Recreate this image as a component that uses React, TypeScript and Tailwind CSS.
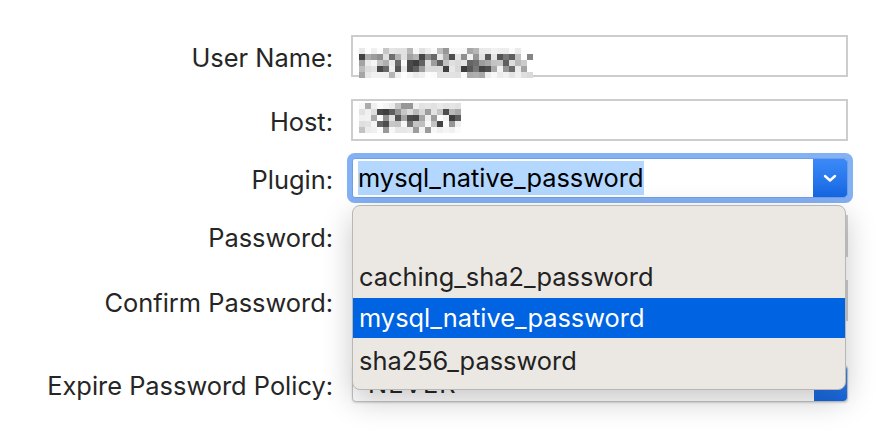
import React from "react";

function Mosaic({ cols, rows, seed, size, fade }: { cols: number; rows: number; seed: number; size: number; fade?: number }) {
  let s = seed;
  const rnd = () => {
    s = (s * 1103515245 + 12345) % 2147483648;
    return s / 2147483648;
  };
  const rects: React.ReactElement[] = [];
  for (let r = 0; r < rows; r++) {
    for (let c = 0; c < cols; c++) {
      const v = rnd();
      const mid = r >= 1 && r <= rows - 2;
      let g: number;
      if (mid) {
        g = v < 0.35 ? 60 + Math.floor(rnd() * 60) : v < 0.65 ? 140 + Math.floor(rnd() * 60) : 215 + Math.floor(rnd() * 40);
      } else {
        g = v < 0.2 ? 150 + Math.floor(rnd() * 50) : 225 + Math.floor(rnd() * 30);
      }
      if (fade && c >= cols - fade) g = Math.min(255, g + 60);
      rects.push(
        <rect key={`${r}-${c}`} x={c * size} y={r * size} width={size} height={size} fill={`rgb(${g},${g},${g})`} />
      );
    }
  }
  return (
    <svg width={cols * size} height={rows * size} className="block">
      {rects}
    </svg>
  );
}

function Chevron() {
  return (
    <svg width="14" height="9" viewBox="0 0 14 9">
      <path d="M2 2 L7 6.5 L12 2" fill="none" stroke="white" strokeWidth="2.4" strokeLinecap="round" strokeLinejoin="round" />
    </svg>
  );
}

const label = "w-[333px] shrink-0 text-right text-[25.4px] text-[#262626] leading-none pt-[4px]";

export default function App() {
  return (
    <div className="relative w-[886px] h-[444px] bg-white overflow-hidden font-['Inter','Noto_Sans',sans-serif]">
      <div className="flex flex-col">
        {/* User Name */}
        <div className="flex items-center mt-[35px] h-[42px]">
          <div className={label}>User Name:</div>
          <div className="ml-[18px] w-[497px] h-[42px] border-2 border-[#cdcdcd] bg-white overflow-visible">
            <div className="ml-[6px] mt-[11px]">
              <Mosaic cols={29} rows={5} seed={7} size={6} fade={2} />
            </div>
          </div>
        </div>
        {/* Host */}
        <div className="flex items-center mt-[22px] h-[42px]">
          <div className={label}>Host:</div>
          <div className="ml-[18px] w-[497px] h-[42px] border-2 border-[#cdcdcd] bg-white">
            <div className="ml-[6px] mt-[2px]">
              <Mosaic cols={17} rows={5} seed={31} size={6} />
            </div>
          </div>
        </div>
        {/* Plugin */}
        <div className="flex items-center mt-[17px] h-[40px]">
          <div className={label}>Plugin:</div>
          <div className="ml-[19px] w-[496px] h-[40px] flex rounded-[3px] border border-[#6f9fe9] bg-white shadow-[0_0_0_5px_#84b0f4]">
            <div className="flex-1 flex items-center pl-[5px]">
              <span className="bg-[#b3d7ff] text-black text-[25.4px] leading-[34px] h-[34px] pr-[1px]">mysql_native_password</span>
            </div>
            <div className="w-[34px] h-full flex items-center justify-center rounded-r-[3px] bg-gradient-to-b from-[#3c8af8] to-[#1467e2]">
              <Chevron />
            </div>
          </div>
        </div>
        {/* Password */}
        <div className="flex items-center mt-[17px] h-[42px]">
          <div className={label}>Password:</div>
          <div className="ml-[19px] w-[496px] h-[42px] border-2 border-[#cdcdcd] bg-white" />
        </div>
        {/* Confirm Password */}
        <div className="flex items-center mt-[23px] h-[41px]">
          <div className={label}>Confirm Password:</div>
          <div className="ml-[19px] w-[496px] h-[41px] border-2 border-[#cdcdcd] bg-white" />
        </div>
        {/* Expire Password Policy */}
        <div className="flex items-center mt-[44px] h-[37px]">
          <div className={label}>Expire Password Policy:</div>
          <div className="ml-[19px] w-[496px] h-[37px] flex rounded-[4px] border border-[#c4c4c4] bg-white shadow-[0_1px_2px_rgba(0,0,0,0.15)]">
            <div className="flex-1 flex items-center pl-[15px] pt-[2px] text-[25.4px] text-[#262626] tracking-[1px]">NEVER</div>
            <div className="w-[33px] h-full flex items-center justify-center rounded-r-[4px] bg-gradient-to-b from-[#3c8af8] to-[#1467e2]">
              <Chevron />
            </div>
          </div>
        </div>
      </div>

      {/* Dropdown menu */}
      <div className="absolute left-[352px] top-[205px] w-[494px] h-[185px] rounded-[8px] border border-[#b9b7b3] bg-[#ebe8e3] shadow-[0_10px_30px_rgba(0,0,0,0.22)] overflow-hidden text-[25.4px]">
        <div className="h-[50px]" />
        <div className="h-[42px] flex items-center pl-[6px] text-[#222222]">caching_sha2_password</div>
        <div className="h-[40px] flex items-center pl-[6px] bg-[#0063e1] text-white">mysql_native_password</div>
        <div className="h-[46px] flex items-center pl-[6px] text-[#222222]">sha256_password</div>
      </div>
    </div>
  );
}
